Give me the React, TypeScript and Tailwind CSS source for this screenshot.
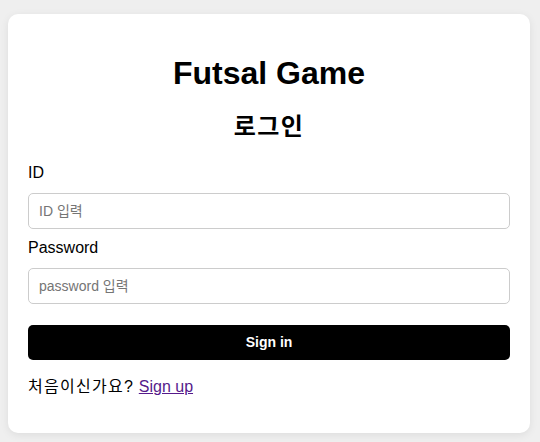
const font = { fontFamily: '"Liberation Sans", Arial, "Noto Sans CJK KR", sans-serif' };

const Field = ({ label, placeholder, type, first }: { label: string; placeholder: string; type: string; first?: boolean }) => (
  <>
    <label className={`block text-[16px] leading-[18px] text-black ${first ? "mt-[23px]" : "mt-[10px]"}`}>{label}</label>
    <input
      type={type}
      placeholder={placeholder}
      className="mt-[11px] block h-[36px] w-full rounded-[5px] border border-[#cccccc] bg-white px-[10px] text-[14px] text-black outline-none placeholder:text-[#757575]"
    />
  </>
);

const Login = () => {
  return (
    <div className="rounded-[10px] bg-white px-5 pt-5 pb-[37px] shadow-[0_2px_8px_rgba(0,0,0,0.08)]">
      <h1 className="mt-[21px] text-center text-[32px] font-bold leading-[37px] text-black">Futsal Game</h1>
      <h2 className="mt-[21px] text-center text-[24px] font-bold leading-[28px] tracking-[1.5px] text-black">로그인</h2>
      <Field first label="ID" placeholder="ID 입력" type="text" />
      <Field label="Password" placeholder="password 입력" type="password" />
      <button className="mt-[21px] block h-[35px] w-full rounded-[5px] bg-black text-[14px] font-bold text-white">
        Sign in
      </button>
      <p className="mt-[18px] text-[16px] leading-[18px] text-black">
        <span className="tracking-[1.3px]">처음이신가요?</span> <a href="#" className="text-[#551a8b] underline">Sign up</a>
      </p>
    </div>
  );
};

export default function App() {
  return (
    <div className="min-h-screen bg-[#efefef] pl-2 pr-[10px] pt-[14px]" style={font}>
      <Login />
    </div>
  );
}
